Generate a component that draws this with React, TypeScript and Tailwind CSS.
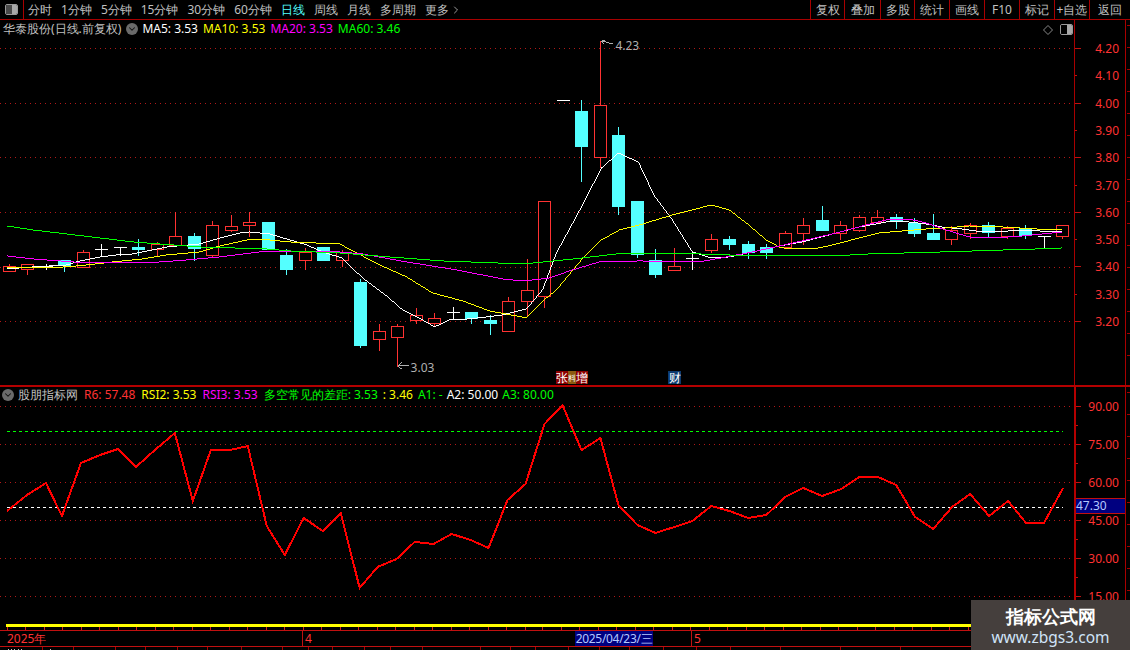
import React from 'react';
import { ChevronDown, ChevronRight } from 'lucide-react';

type Candle = [number, number, number, number, 'r' | 'c' | 'w'];

// top, bottom, wick top, wick bottom, kind (page pixel coordinates)
const candles: Candle[] = [
  [266, 271, 264, 271, 'r'], [264, 269, 264, 274, 'r'], [266, 267, 264, 269, 'w'], [260, 265, 260, 271, 'c'],
  [252, 267, 250, 267, 'r'], [249, 249, 244, 256, 'w'], [247, 247, 247, 255, 'w'], [247, 249, 239, 255, 'c'],
  [244, 249, 242, 255, 'r'], [236, 245, 212, 246, 'r'], [236, 248, 233, 260, 'c'], [225, 255, 221, 256, 'r'],
  [226, 230, 215, 231, 'r'], [222, 225, 212, 236, 'r'], [222, 249, 222, 249, 'c'], [255, 269, 249, 274, 'c'],
  [252, 260, 248, 269, 'r'], [247, 260, 247, 260, 'c'], [252, 260, 250, 266, 'r'], [282, 345, 279, 347, 'c'],
  [331, 339, 324, 350, 'r'], [326, 337, 324, 366, 'r'], [315, 320, 308, 323, 'r'], [318, 323, 313, 326, 'r'],
  [312, 312, 307, 318, 'w'], [312, 318, 312, 323, 'c'], [320, 323, 315, 334, 'c'], [301, 331, 297, 331, 'r'],
  [290, 301, 259, 315, 'r'], [201, 296, 201, 307, 'r'], [100, 100, 100, 100, 'w'], [111, 146, 100, 181, 'c'],
  [105, 157, 41, 167, 'r'], [135, 206, 127, 214, 'c'], [201, 254, 201, 257, 'c'], [260, 274, 249, 277, 'c'],
  [266, 270, 248, 270, 'r'], [258, 258, 253, 269, 'w'], [239, 250, 234, 252, 'r'], [239, 244, 236, 249, 'c'],
  [244, 252, 241, 258, 'c'], [247, 252, 244, 258, 'c'], [233, 247, 231, 247, 'r'], [225, 233, 218, 244, 'r'],
  [220, 230, 206, 230, 'c'], [225, 233, 221, 239, 'r'], [217, 230, 215, 231, 'r'], [217, 222, 210, 223, 'r'],
  [217, 220, 214, 228, 'c'], [223, 233, 218, 236, 'c'], [233, 239, 214, 239, 'c'], [230, 239, 226, 244, 'r'],
  [225, 233, 223, 238, 'r'], [225, 232, 222, 237, 'c'], [228, 236, 226, 238, 'r'], [228, 235, 225, 238, 'c'],
  [236, 236, 236, 247, 'w'], [225, 236, 225, 238, 'r'],
];

const ma5 = '7,269 33,267 67,265 80,261 100,257 117,255 133,254 147,251 167,247 200,244 217,239 240,233 250,232 270,234 287,239 307,245 323,252 342,258 363,278 387,296 403,310 423,320 435,327 450,320 470,319 487,317 503,315 527,309 543,290 557,253 582,207 602,168 619,153 639,162 655,196 673,220 693,252 712,258 730,257 753,252 780,246 803,242 837,233 860,227 877,224 887,222 910,222 927,224 943,227 963,229 983,232 1010,231 1040,231 1063,232';
const ma10 = '7,268 67,267 87,265 113,262 143,259 167,255 200,252 220,246 247,240 270,240 290,242 340,244 357,253 380,265 407,277 433,293 463,301 490,311 527,318 547,298 557,290 582,260 602,240 620,230 640,225 673,215 712,205 730,210 747,223 767,240 780,247 790,249 803,249 820,248 837,244 860,238 880,233 903,231 927,229 947,228 970,226 1003,227 1037,229 1063,230';
const ma20 = '7,256 33,259 60,261 87,263 147,263 187,260 220,257 260,252 340,252 363,254 407,262 457,270 503,279 523,281 550,278 573,270 600,262 640,261 700,262 727,257 753,252 780,246 803,241 837,233 867,225 887,220 910,219 927,223 947,230 970,237 997,238 1023,236 1043,234 1063,232';
const ma60 = '7,226 33,230 67,234 100,238 133,242 160,244 200,247 267,249 290,251 340,253 390,257 443,261 523,264 583,258 617,254 700,254 757,256 833,256 870,254 943,252 1037,249 1063,248';
const rsi = '7,511 27,495 46,483 62,516 81,463 100,455 118,449 136,467 155,450 175,433 193,501 211,450 230,450 248,446 267,526 285,555 304,518 323,531 341,513 360,588 378,567 397,559 415,542 434,544 452,534 471,540 489,548 508,500 526,484 545,424 563,405 582,450 601,438 619,505 638,525 656,533 675,527 693,521 712,506 730,511 749,518 767,515 786,497 804,488 823,496 842,489 860,477 879,477 897,485 916,517 934,529 953,507 971,494 990,516 1009,501 1027,523 1045,523 1064,488';

const candleX = (i: number) => Math.round(8.5 + 18.5 * i);

const priceTicks = ['4.20', '4.10', '4.00', '3.90', '3.80', '3.70', '3.60', '3.50', '3.40', '3.30', '3.20'];
const rsiTicks = ['90.00', '75.00', '60.00', '45.00', '30.00', '15.00'];
const leftTabs = ['分时', '1分钟', '5分钟', '15分钟', '30分钟', '60分钟', '日线', '周线', '月线', '多周期'];
const rightTabs: [string, string][] = [
  ['复权', 'w-[34px]'], ['叠加', 'w-[36px]'], ['多股', 'w-[34px]'], ['统计', 'w-[35px]'], ['画线', 'w-[35px]'],
  ['F10', 'w-[35px]'], ['标记', 'w-[35px]'], ['+自选', 'w-[35px]'], ['返回', 'w-[41px]'],
];
const footerTicks = [42, 73, 115, 145, 177, 207, 241, 282, 308, 332, 364, 390, 422, 480, 510, 535, 568, 599, 629, 663, 696, 730, 780, 840, 900];

const PanelIcon = ({ dark }: { dark?: boolean }) => (
  <div className="flex h-[11px] w-[13px] rounded-[2px] border border-[#9a9a9a] overflow-hidden">
    <div className={dark ? 'flex-1 bg-[#4a4a4a]' : 'flex-1 bg-black'} />
    <div className="w-[5px] bg-[#a8a8a8]" />
  </div>
);

const CircleChevron = () => (
  <span className="flex h-[12px] w-[12px] items-center justify-center rounded-full bg-[#6a6a6a]">
    <ChevronDown size={10} strokeWidth={2.5} color="#111" />
  </span>
);

const EdgeTicks = ({ height }: { height: number }) => (
  <svg width="4" height={height} className="block">
    {Array.from({ length: Math.floor(height / 22) }).map((_, i) => (
      <rect key={i} x="1" y={5 + i * 22} width="3" height="1" fill="#a00000" />
    ))}
  </svg>
);

const PriceChart = () => (
  <svg width="1075" height="365" viewBox="0 20 1075 365" className="block" shapeRendering="crispEdges">
    {[48, 103, 157, 212, 267, 321].map((y) => (
      <line key={y} x1="0" x2="1075" y1={y + 0.5} y2={y + 0.5} stroke="#b01818" strokeDasharray="1 4" />
    ))}
    {candles.map(([top, bottom, wickTop, wickBottom, kind], i) => {
      const x = candleX(i);
      if (kind === 'w') {
        return (
          <g key={i} fill="#ffffff">
            <rect x={x - 6} y={top} width="13" height="1" />
            <rect x={x} y={wickTop} width="1" height={wickBottom - wickTop + 1} />
          </g>
        );
      }
      if (kind === 'c') {
        return (
          <g key={i} fill="#54ffff">
            <rect x={x} y={wickTop} width="1" height={wickBottom - wickTop + 1} />
            <rect x={x - 6} y={top} width="13" height={bottom - top + 1} />
          </g>
        );
      }
      return (
        <g key={i}>
          <rect x={x} y={wickTop} width="1" height={wickBottom - wickTop + 1} fill="#ff3232" />
          <rect x={x - 6} y={top} width="13" height={bottom - top + 1} fill="#ff3232" />
          <rect x={x - 5} y={top + 1} width="11" height={bottom - top - 1} fill="#000000" />
        </g>
      );
    })}
    <polyline points={ma5} fill="none" stroke="#ffffff" strokeWidth="1" />
    <polyline points={ma10} fill="none" stroke="#ffff00" strokeWidth="1" />
    <polyline points={ma20} fill="none" stroke="#ff00ff" strokeWidth="1" />
    <polyline points={ma60} fill="none" stroke="#00ff00" strokeWidth="1" />
    <g stroke="#b0b0b0" fill="none">
      <polyline points="603,41 614,44" />
      <polyline points="606,40 602,41 604,44" />
      <polyline points="398,366 409,366" />
      <polyline points="402,363 398,366 402,369" />
    </g>
    <text x="616" y="50" fill="#b0b0b0" fontSize="12">4.23</text>
    <text x="411" y="372" fill="#b0b0b0" fontSize="12">3.03</text>
  </svg>
);

const RsiChart = () => (
  <svg width="1075" height="243" viewBox="0 387 1075 243" className="block" shapeRendering="crispEdges">
    {[406, 444, 482, 520, 558, 596].map((y) => (
      <line key={y} x1="0" x2="1075" y1={y + 0.5} y2={y + 0.5} stroke="#b01818" strokeDasharray="1 4" />
    ))}
    <line x1="7" x2="1064" y1="431.5" y2="431.5" stroke="#00ff00" strokeDasharray="3 3" />
    <line x1="7" x2="1064" y1="507.5" y2="507.5" stroke="#ffffff" strokeDasharray="3 3" />
    <polyline points={rsi} fill="none" stroke="#ff0000" strokeWidth="2" />
    <rect x="6" y="624" width="1069" height="3" fill="#ffff00" />
    {candles.map((_, i) => (
      <rect key={i} x={candleX(i) - 2} y="627" width="1" height="3" fill="#d02020" />
    ))}
  </svg>
);

export default function App() {
  return (
    <div className="relative flex h-[650px] w-[1130px] flex-col overflow-hidden bg-black font-['Liberation_Sans','Noto_Sans_CJK_SC',sans-serif] text-[12px] leading-[14px] text-[#c0c0c0]">
      {/* top toolbar */}
      <div className="flex h-[20px] shrink-0 items-stretch border-b border-[#a80000]">
        <div className="flex w-[24px] items-center justify-center border-r border-[#a80000] pr-[1px]">
          <PanelIcon dark />
        </div>
        <div className="flex items-center gap-[9px] pl-[4px]">
          {leftTabs.map((tab) => (
            <span key={tab} className={tab === '日线' ? 'text-[#54ffff]' : ''}>{tab}</span>
          ))}
          <span className="flex items-center">
            更多
            <ChevronRight size={12} strokeWidth={1.6} className="ml-[1px]" />
          </span>
        </div>
        <div className="ml-auto flex">
          {rightTabs.map(([tab, width]) => (
            <div key={tab} className={`flex items-center justify-center border-l border-[#a80000] ${width}`}>{tab}</div>
          ))}
        </div>
      </div>

      {/* price panel */}
      <div className="relative flex h-[365px] shrink-0">
        <PriceChart />
        <div className="w-[51px] border-l border-[#a80000]">
          <svg width="50" height="365" viewBox="1076 20 50 365" className="block" shapeRendering="crispEdges">
            {priceTicks.map((label, i) => {
              const y = 48 + i * 27.3;
              return (
                <g key={label}>
                  <rect x="1076" y={Math.round(y)} width={i % 2 === 0 ? 6 : 2} height="1" fill="#c01010" />
                  <text x="1120" y={Math.round(y) + 5} textAnchor="end" fill="#ff3232" fontSize="12" shapeRendering="auto">{label}</text>
                </g>
              );
            })}
          </svg>
        </div>
        <div className="border-l border-[#a80000]">
          <EdgeTicks height={365} />
        </div>

        <div className="absolute left-[3px] top-[2px] flex items-center whitespace-nowrap">
          <span>华泰股份(日线.前复权)</span>
          <span className="ml-[5px] mr-[4px]"><CircleChevron /></span>
          <span className="text-white">MA5: 3.53</span>
          <span className="ml-[5px] text-[#ffff00]">MA10: 3.53</span>
          <span className="ml-[5px] text-[#ff00ff]">MA20: 3.53</span>
          <span className="ml-[5px] text-[#00ff00]">MA60: 3.46</span>
        </div>
        <div className="absolute left-[1043px] top-[5px]">
          <svg width="10" height="10" viewBox="0 0 10 10" className="block">
            <path d="M5 0.5 L9.5 5 L5 9.5 L0.5 5 Z" fill="none" stroke="#888" />
          </svg>
        </div>
        <div className="absolute left-[1060px] top-[4px]">
          <PanelIcon />
        </div>
        <div className="absolute left-[556px] top-[351px] flex h-[13px] leading-[13px] text-white">
          <span className="w-[12px] bg-[#8b0000]">张</span>
          <span className="w-[8px] bg-[#8b5a10] text-[8px]">料</span>
          <span className="w-[12px] bg-[#8b0000]">增</span>
        </div>
        <div className="absolute left-[668px] top-[351px] h-[13px] w-[13px] bg-[#0c3a6e] text-center leading-[13px] text-white">财</div>
      </div>

      {/* indicator panel */}
      <div className="relative flex h-[245px] shrink-0 border-t-2 border-[#b40000]">
        <RsiChart />
        <div className="relative w-[51px] border-l-2 border-[#b40000]">
          <svg width="49" height="243" viewBox="1077 387 49 243" className="block" shapeRendering="crispEdges">
            {rsiTicks.map((label, i) => {
              const y = 406 + i * 38;
              return (
                <g key={label}>
                  <rect x="1077" y={y} width="5" height="1" fill="#c01010" />
                  <rect x="1077" y={y + 19} width="2" height="1" fill="#c01010" />
                  <text x="1120" y={y + 5} textAnchor="end" fill="#ff3232" fontSize="12" shapeRendering="auto">{label}</text>
                </g>
              );
            })}
          </svg>
          <div className="absolute left-0 top-[111px] h-[16px] w-[49px] border-y border-[#c01010] bg-[#000080] leading-[14px] text-[#b4c8ff]">47.30</div>
        </div>
        <div className="border-l border-[#a80000]">
          <EdgeTicks height={243} />
        </div>

        <div className="absolute left-[2px] top-[1px] flex items-center whitespace-nowrap">
          <CircleChevron />
          <span className="ml-[4px]">股朋指标网</span>
          <span className="ml-[6px] text-[#ff3232]">R6: 57.48</span>
          <span className="ml-[6px] text-[#ffff00]">RSI2: 3.53</span>
          <span className="ml-[6px] text-[#ff00ff]">RSI3: 3.53</span>
          <span className="ml-[6px] text-[#00ff00]">多空常见的差距: 3.53</span>
          <span className="ml-[5px] text-[#ffff00]">: 3.46</span>
          <span className="ml-[5px] text-[#00ff00]">A1: -</span>
          <span className="ml-[4px] text-white">A2: 50.00</span>
          <span className="ml-[4px] text-[#00ff00]">A3: 80.00</span>
        </div>
      </div>

      {/* time axis */}
      <div className="flex h-[17px] shrink-0 border-y border-[#c01010] text-[#ff3232] leading-[15px]">
        <div className="w-[303px] border-r border-[#c01010] pl-[7px]">2025年</div>
        <div className="w-[272px] pl-[2px]">4</div>
        <div className="w-[78px] whitespace-nowrap bg-[#000080] text-center tracking-[-0.3px] text-[#b4c8ff]">2025/04/23/三</div>
        <div className="w-[39px] border-r border-[#c01010]" />
        <div className="pl-[2px]">5</div>
      </div>
      <div className="h-[3px] shrink-0 overflow-hidden">
        <svg width="971" height="3" className="block">
          {footerTicks.map((x) => (
            <rect key={x} x={x} y="0" width="1" height="3" fill="#a80000" />
          ))}
          {[8, 11, 14, 18, 21, 50].map((x) => (
            <rect key={x} x={x} y="2" width="1" height="1" fill="#c0c0c0" />
          ))}
        </svg>
      </div>

      {/* site watermark */}
      <div className="absolute bottom-0 right-0 flex h-[50px] w-[159px] flex-col items-center bg-[#453f3d] pt-[4px]">
        <span className="text-[18px] font-bold leading-[24px] text-white">指标公式网</span>
        <span className="text-[15.5px] leading-[19px] text-[#d0e4f8]">www.zbgs3.com</span>
      </div>
    </div>
  );
}
